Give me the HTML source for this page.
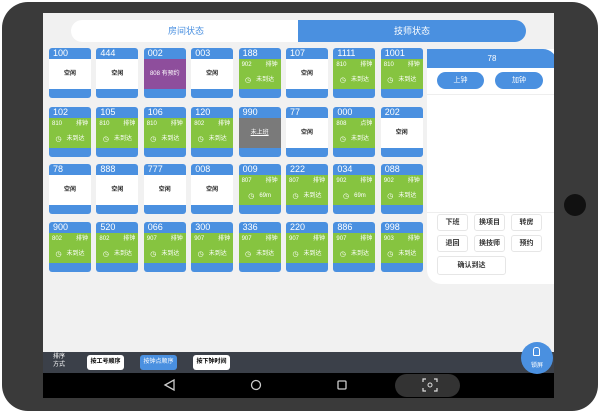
<!DOCTYPE html>
<html><head><meta charset="utf-8"><style>
*{margin:0;padding:0;box-sizing:border-box}
body{width:600px;height:412px;background:#fff;position:relative;overflow:hidden;font-family:"Liberation Sans","Noto Sans CJK SC",sans-serif}
.tab{position:absolute;left:2px;top:2px;width:596px;height:409px;background:#3a3a3a;border-radius:26px}
.scr{position:absolute;left:43px;top:13px;width:511px;height:385px;background:#f1f1f1;overflow:hidden}
.a{position:absolute}
.card{position:absolute;width:42px;height:50px;border-radius:3px;overflow:hidden;background:#4a90e0}
.card .h{height:11px;color:#fff;font-size:9px;line-height:11px;padding-left:4px}
.card .b{position:absolute;top:11px;left:0;right:0;height:30px;background:#fff;font-size:6px;color:#222;text-align:center;line-height:30px;font-weight:bold}
.card .g{background:#86c440;color:#fff;font-weight:normal;line-height:13px;text-align:left}
.card .g div{display:flex;justify-content:space-between;padding:0 3px;font-size:6px}
.card .p{background:#8e4e9c;color:#fff;font-weight:normal}
.card .gr{background:#7a7a7a;color:#fff;font-weight:normal;text-decoration:underline}
.btn{position:absolute;background:#fff;border:1px solid #e6e6e6;border-radius:3px;font-size:7px;text-align:center;line-height:15px;color:#333;font-weight:bold}
</style></head><body>
<div class="tab"></div>
<div class="a" style="left:564px;top:194px;width:22px;height:22px;border-radius:50%;background:#111"></div>
<div class="scr">
 <div class="a" style="left:28px;top:7px;width:240px;height:22px;background:#fff;border-radius:11px;color:#4a90e0;font-size:9px;text-align:center;line-height:22px;padding-right:10px">房间状态</div>
 <div class="a" style="left:255px;top:7px;width:228px;height:22px;background:#4a90e0;border-radius:0 11px 11px 0;color:#fff;font-size:9px;text-align:center;line-height:22px">技师状态</div>
 <div id="g"></div>
 <div class="a" style="left:384px;top:36px;width:130px;height:235px;background:#fff;border-radius:0 0 0 14px"></div>
 <div class="a" style="left:384px;top:36px;width:130px;height:19px;background:#4a90e0;border-radius:0 14px 0 0;color:#fff;font-size:8px;text-align:center;line-height:19px">78</div>
 <div class="a" style="left:394px;top:59px;width:47px;height:17px;background:#4a90e0;border-radius:9px;color:#fff;font-size:7px;text-align:center;line-height:17px">上钟</div>
 <div class="a" style="left:452px;top:59px;width:48px;height:17px;background:#4a90e0;border-radius:9px;color:#fff;font-size:7px;text-align:center;line-height:17px">加钟</div>
 <div class="a" style="left:384px;top:81px;width:130px;height:1px;background:#eee"></div>
 <div class="a" style="left:384px;top:199px;width:130px;height:1px;background:#eee"></div>
 <div class="btn" style="left:394px;top:201px;width:31px;height:17px">下班</div>
 <div class="btn" style="left:431px;top:201px;width:31px;height:17px">换项目</div>
 <div class="btn" style="left:468px;top:201px;width:31px;height:17px">转房</div>
 <div class="btn" style="left:394px;top:222px;width:31px;height:17px">退回</div>
 <div class="btn" style="left:431px;top:222px;width:31px;height:17px">换技师</div>
 <div class="btn" style="left:468px;top:222px;width:31px;height:17px">预约</div>
 <div class="btn" style="left:394px;top:243px;width:69px;height:19px;line-height:17px">确认到达</div>
 <div class="a" style="left:0;top:339px;width:511px;height:21px;background:#3b4049"></div>
 <div class="a" style="left:10px;top:340px;color:#fff;font-size:6px;line-height:8px;text-align:center">排序<br>方式</div>
 <div class="a" style="left:44px;top:342px;width:37px;height:15px;background:#fff;border-radius:3px;font-size:6px;line-height:15px;text-align:center;font-weight:bold">按工号顺序</div>
 <div class="a" style="left:97px;top:342px;width:37px;height:15px;background:#4a90e0;color:#fff;border-radius:3px;font-size:6px;line-height:15px;text-align:center">按钟点顺序</div>
 <div class="a" style="left:150px;top:342px;width:37px;height:15px;background:#fff;border-radius:3px;font-size:6px;line-height:15px;text-align:center;font-weight:bold">按下钟时间</div>
 <div class="a" style="left:0;top:360px;width:511px;height:25px;background:#000"></div>
 <svg class="a" style="left:0;top:360px" width="511" height="25">
  <path d="M122 12 L131 7 L131 17 Z" fill="none" stroke="#ccc" stroke-width="1.3"/>
  <circle cx="213" cy="12" r="4.5" fill="none" stroke="#ccc" stroke-width="1.3"/>
  <rect x="295" y="8" width="8" height="8" rx="1" fill="none" stroke="#ccc" stroke-width="1.3"/>
  <rect x="352" y="1" width="65" height="23" rx="11.5" fill="#333"/>
  <path d="M380 9v-3h3M391 6h3v3M394 15v3h-3M383 18h-3v-3" fill="none" stroke="#ddd" stroke-width="1.2"/>
  <circle cx="387" cy="12" r="2" fill="none" stroke="#ddd"/>
 </svg>
 <div class="a" style="left:478px;top:329px;width:32px;height:32px;border-radius:50%;background:#4a90e0;color:#fff;font-size:6px;text-align:center;padding-top:18px">锁屏</div>
 <div class="a" style="left:490px;top:334px;width:7px;height:9px;border:1.2px solid #fff;border-radius:3px 3px 1px 1px"></div>
</div>
<script>
var d=[
[["100","w"],["444","w"],["002","p"],["003","w"],["188","g","902","排钟","未到达"],["107","w"],["1111","g","810","排钟","未到达"],["1001","g","810","排钟","未到达"]],
[["102","g","810","排钟","未到达"],["105","g","810","排钟","未到达"],["106","g","810","排钟","未到达"],["120","g","802","排钟","未到达"],["990","x"],["77","w"],["000","g","808","点钟","未到达"],["202","w"]],
[["78","w"],["888","w"],["777","w"],["008","w"],["009","g","807","排钟","69m"],["222","g","807","排钟","未到达"],["034","g","902","排钟","69m"],["088","g","902","排钟","未到达"]],
[["900","g","802","排钟","未到达"],["520","g","802","排钟","未到达"],["066","g","907","排钟","未到达"],["300","g","907","排钟","未到达"],["336","g","907","排钟","未到达"],["220","g","907","排钟","未到达"],["886","g","907","排钟","未到达"],["998","g","903","排钟","未到达"]]];
var h="",ys=[35,94,151,209];
d.forEach(function(r,i){r.forEach(function(c,j){
var b;
if(c[1]=="w")b='<div class="b">空闲</div>';
else if(c[1]=="p")b='<div class="b p">808 有预约</div>';
else if(c[1]=="x")b='<div class="b gr">未上班</div>';
else b='<div class="b g"><div><span>'+c[2]+'</span><span>'+c[3]+'</span></div><div style="justify-content:center;gap:5px;margin-top:2px"><span style="font-size:7px">&#9719;</span><span>'+c[4]+'</span></div></div>';
h+='<div class="card" style="left:'+(6+j*47.4)+'px;top:'+ys[i]+'px"><div class="h">'+c[0]+'</div>'+b+'</div>';
});});
document.getElementById("g").innerHTML=h;
</script>
</body></html>
